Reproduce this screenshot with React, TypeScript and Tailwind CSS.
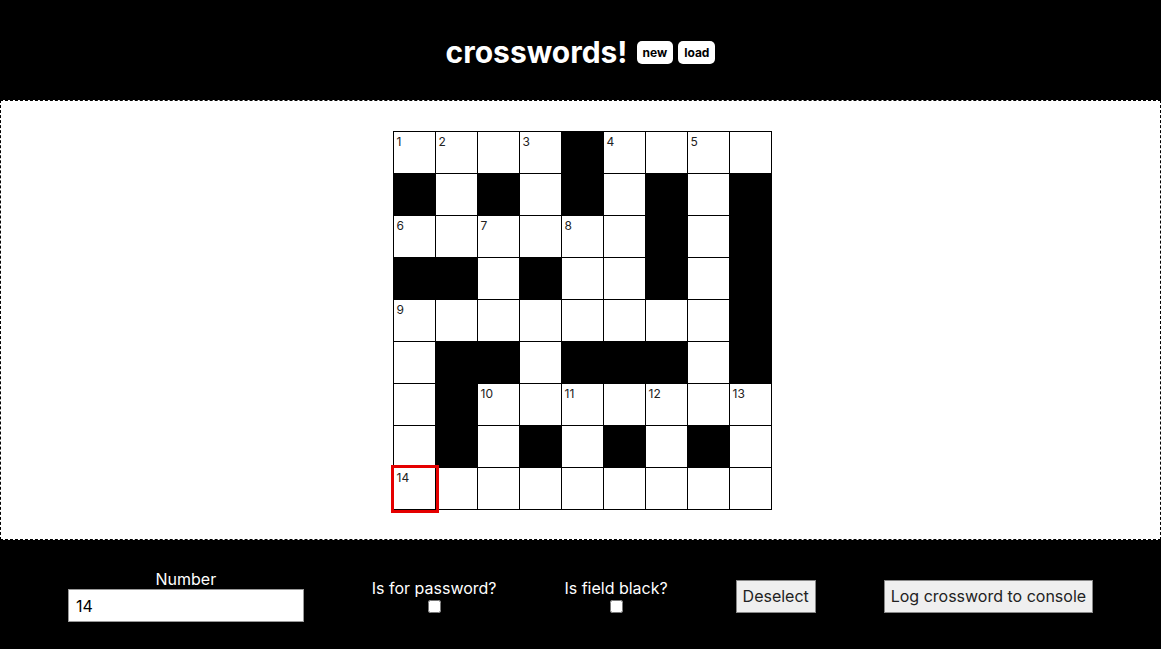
import { useState } from 'react';

// 9x9 board: '#' is a black field, otherwise the clue number (0 = none)
const LAYOUT: (number | '#')[][] = [
  [1, 2, 0, 3, '#', 4, 0, 5, 0],
  ['#', 0, '#', 0, '#', 0, '#', 0, '#'],
  [6, 0, 7, 0, 8, 0, '#', 0, '#'],
  ['#', '#', 0, '#', 0, 0, '#', 0, '#'],
  [9, 0, 0, 0, 0, 0, 0, 0, '#'],
  [0, '#', '#', 0, '#', '#', '#', 0, '#'],
  [0, '#', 10, 0, 11, 0, 12, 0, 13],
  [0, '#', 0, '#', 0, '#', 0, '#', 0],
  [14, 0, 0, 0, 0, 0, 0, 0, 0],
];

const font = { fontFamily: 'Inter, "Liberation Sans", Arial, sans-serif' };

function Board({ selected, onSelect }: { selected: [number, number] | null; onSelect: (rc: [number, number]) => void }) {
  return (
    <div className="mx-auto grid w-fit grid-cols-9 border-l border-t border-black">
      {LAYOUT.map((row, r) =>
        row.map((cell, c) => {
          const isSel = selected && selected[0] === r && selected[1] === c;
          return (
            <div
              key={`${r}-${c}`}
              onClick={() => onSelect([r, c])}
              className={`relative h-[42px] w-[42px] border-b border-r border-black ${
                cell === '#' ? 'bg-black' : 'bg-white'
              } ${isSel ? 'z-10 outline-[3px] outline-solid outline-[#e50000]' : ''}`}
            >
              {typeof cell === 'number' && cell > 0 && (
                <span className="absolute left-[3px] top-[3px] text-[12px] leading-[13px] text-[#222]">{cell}</span>
              )}
            </div>
          );
        })
      )}
    </div>
  );
}

export default function App() {
  const [selected, setSelected] = useState<[number, number] | null>([8, 0]);

  return (
    <div className="min-h-[649px] bg-black" style={font}>
      {/* Header */}
      <header className="flex h-[100px] items-center justify-center gap-[9px] pt-[4px] text-white">
        <h1 className="text-[30px] font-bold leading-none">crosswords!</h1>
        <div className="flex gap-[5px] pt-[1px]">
          <button className="h-[23px] rounded-[5px] bg-white px-[6px] text-[12px] font-bold text-black">new</button>
          <button className="h-[23px] rounded-[5px] bg-white px-[6px] text-[12px] font-bold text-black">load</button>
        </div>
      </header>

      {/* Board */}
      <main className="h-[440px] border border-dashed border-black bg-white py-[30px] pl-[3px]">
        <Board selected={selected} onSelect={setSelected} />
      </main>

      {/* Controls */}
      <footer className="flex h-[109px] items-center justify-evenly pt-[3px] text-[16px] text-white">
        <label className="flex flex-col items-center">
          <span className="leading-[19px]">Number</span>
          <input
            type="number"
            defaultValue={14}
            className="h-[33px] w-[236px] border border-[#999] bg-white px-[7px] text-[16px] text-black"
          />
        </label>
        <label className="flex flex-col items-center">
          <span className="leading-[19px]">Is for password?</span>
          <input type="checkbox" className="m-0 mt-[2px] h-[13px] w-[13px]" />
        </label>
        <label className="flex flex-col items-center">
          <span className="leading-[19px]">Is field black?</span>
          <input type="checkbox" className="m-0 mt-[2px] h-[13px] w-[13px]" />
        </label>
        <button
          onClick={() => setSelected(null)}
          className="h-[33px] border border-[#888] bg-[#efefef] px-[6px] text-[16px] text-[#222]"
        >
          Deselect
        </button>
        <button
          onClick={() => console.log(LAYOUT)}
          className="h-[33px] border border-[#888] bg-[#efefef] px-[6px] text-[16px] text-[#222]"
        >
          Log crossword to console
        </button>
      </footer>
    </div>
  );
}
